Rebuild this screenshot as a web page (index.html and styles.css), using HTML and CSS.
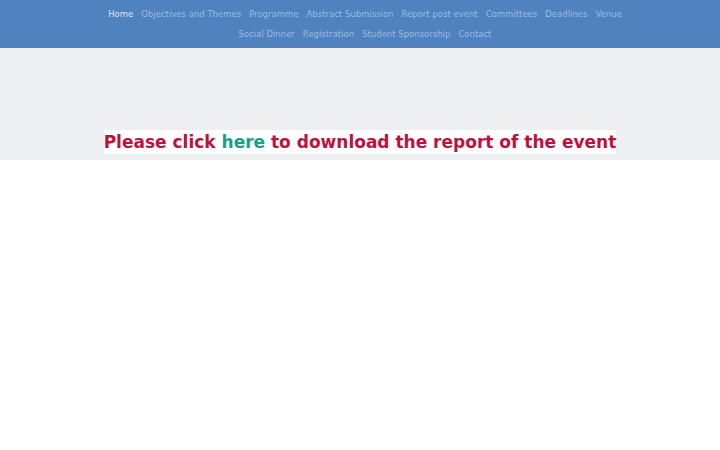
FILE: index.html
```html
<!DOCTYPE html>
<html lang="en">
<head>
  <meta charset="UTF-8">
  <meta name="viewport" content="width=device-width, initial-scale=1.0">
  <title>Home</title>
  <link rel="stylesheet" href="styles.css">
</head>
<body>
  <nav class="navbar">
    <ul class="nav-list">
      <li><a class="nav-link active" href="#">Home</a></li>
      <li><a class="nav-link" href="#">Objectives and Themes</a></li>
      <li><a class="nav-link" href="#">Programme</a></li>
      <li><a class="nav-link" href="#">Abstract Submission</a></li>
      <li><a class="nav-link" href="#">Report post event</a></li>
      <li><a class="nav-link" href="#">Committees</a></li>
      <li><a class="nav-link" href="#">Deadlines</a></li>
      <li><a class="nav-link" href="#">Venue</a></li>
      <li><a class="nav-link" href="#">Social Dinner</a></li>
      <li><a class="nav-link" href="#">Registration</a></li>
      <li><a class="nav-link" href="#">Student Sponsorship</a></li>
      <li><a class="nav-link" href="#">Contact</a></li>
    </ul>
  </nav>

  <header class="banner">
    <h2 class="report-title"><span class="highlight">Please click <a href="#" class="report-link">here</a> to download the report of the event</span></h2>
  </header>
</body>
</html>
```

FILE: styles.css
```css
body, html {
  margin: 0;
  padding: 0;
  font-family: 'DejaVu Sans', sans-serif;
  box-sizing: border-box;
}
.navbar {
  background-color: #4f82bf;
  height: 48px;
  padding: 4px 90px 0 100px;
  box-sizing: border-box;
}
.nav-list {
  list-style: none;
  margin: 0;
  padding: 0;
  display: flex;
  flex-wrap: wrap;
  justify-content: center;
  column-gap: 8px;
}
.nav-link {
  display: block;
  font-size: 8.5px;
  line-height: 20px;
  color: #9dbadf;
  text-decoration: none;
}
.nav-link.active {
  color: #dbe5f2;
}
.banner {
  background-color: #eeeff1;
  height: 112px;
  display: flex;
  align-items: flex-end;
  justify-content: center;
}
.report-title {
  margin: 0 0 8px;
  font-size: 17px;
  font-weight: bold;
  color: #c0103e;
}
.highlight {
  background: #fff;
  padding: 2px 0;
}
.report-link {
  color: #16a08a;
  text-decoration: none;
}
```
